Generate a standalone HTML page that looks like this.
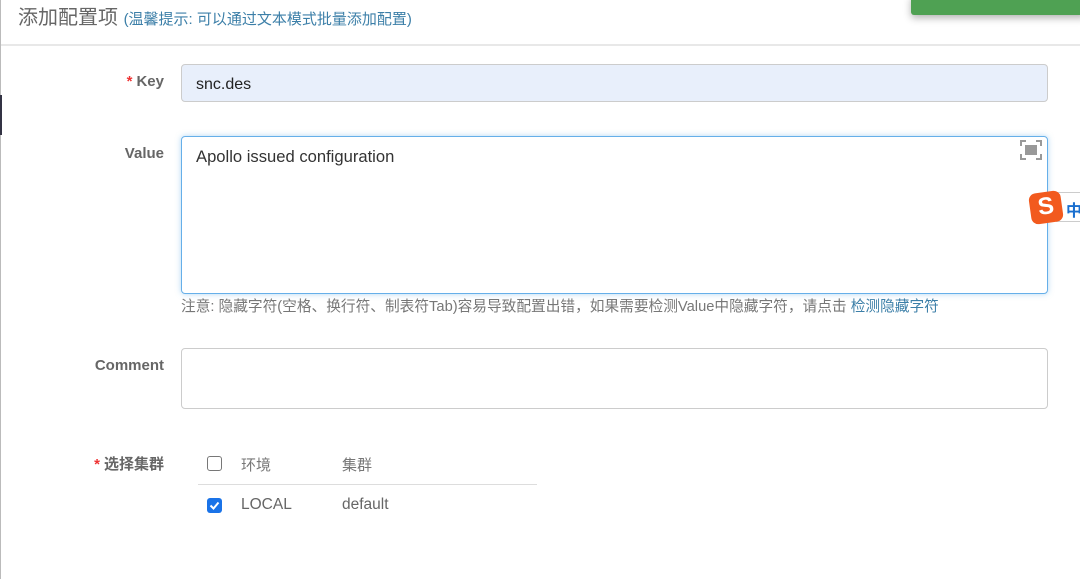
<!DOCTYPE html>
<html><head><meta charset="utf-8"><style>
*{margin:0;padding:0;box-sizing:border-box}
body{width:1080px;height:579px;background:#fff;position:relative;overflow:hidden;font-family:"Liberation Sans","Noto Sans CJK SC",sans-serif;color:#333}
.abs{position:absolute}
.lbl{position:absolute;font-weight:bold;font-size:15px;color:#666;text-align:right;width:164px;left:0}
.lbl b{color:#e33;margin-right:4px}
</style></head><body>
<div class="abs" style="left:0;top:0;width:1px;height:579px;background:#bbb"></div>
<div class="abs" style="left:0;top:95px;width:2px;height:40px;background:#334"></div>
<div class="abs" style="left:911px;top:-5px;width:175px;height:20px;background:#4fa153;border-radius:3px;box-shadow:0 3px 8px rgba(0,0,0,.3)"></div>
<div class="abs" style="left:18px;top:1px;font-size:20px;color:#666;white-space:nowrap">添加配置项 <span style="font-size:15px;color:#3c7fa8">(温馨提示: 可以通过文本模式批量添加配置)</span></div>
<div class="abs" style="left:1px;top:44px;width:1079px;height:2px;background:#e8e8e8"></div>

<div class="lbl" style="top:73px"><b>*</b>Key</div>
<div class="abs" style="left:181px;top:64px;width:867px;height:38px;background:#e8effb;border:1px solid #ccc;border-radius:4px;font-size:16px;padding:11px 14px 0;color:#222">snc.des</div>

<div class="lbl" style="top:145px">Value</div>
<div class="abs" style="left:181px;top:136px;width:867px;height:158px;border:1px solid #66afe9;border-radius:4px;box-shadow:0 0 6px rgba(102,175,233,.5);font-size:16.6px;padding:10px 14px;color:#333">Apollo issued configuration</div>
<svg class="abs" style="left:1020px;top:140px" width="22" height="20" viewBox="0 0 22 20"><path d="M1 6V1h5M16 1h5v5M21 14v5h-5M6 19H1v-5" fill="none" stroke="#999" stroke-width="2"/><rect x="5" y="5" width="12" height="10" fill="#999"/></svg>
<div class="abs" style="left:1056px;top:192px;width:30px;height:30px;background:#fff;border:1px solid #ccc;font-size:16px;color:#1a6fcf;font-weight:bold;padding:4px 0 0 9px">中</div>
<div class="abs" style="left:1030px;top:192px;width:32px;height:31px;background:#f25a1e;border-radius:7px;transform:rotate(-8deg);color:#fff;font-weight:bold;font-size:24px;text-align:center;line-height:30px">S</div>

<div class="abs" style="left:181px;top:295px;font-size:14.7px;color:#777;white-space:nowrap">注意: 隐藏字符(空格、换行符、制表符Tab)容易导致配置出错，如果需要检测Value中隐藏字符，请点击 <span style="color:#3c7fa8">检测隐藏字符</span></div>

<div class="lbl" style="top:357px">Comment</div>
<div class="abs" style="left:181px;top:348px;width:867px;height:61px;border:1px solid #ccc;border-radius:4px"></div>

<div class="lbl" style="top:453px"><b>*</b>选择集群</div>
<div class="abs" style="left:207px;top:456px;width:15px;height:15px;border:1px solid #777;border-radius:3px"></div>
<div class="abs" style="left:241px;top:454px;font-size:15px;color:#777">环境</div>
<div class="abs" style="left:342px;top:454px;font-size:15px;color:#777">集群</div>
<div class="abs" style="left:198px;top:484px;width:339px;height:1px;background:#ddd"></div>
<div class="abs" style="left:207px;top:498px;width:15px;height:15px;background:#1a73e8;border-radius:3px"><svg width="15" height="15" viewBox="0 0 15 15"><path d="M3.5 7.5l3 3 5-6" fill="none" stroke="#fff" stroke-width="2"/></svg></div>
<div class="abs" style="left:241px;top:496px;font-size:15.5px;color:#666">LOCAL</div>
<div class="abs" style="left:342px;top:496px;font-size:15.5px;color:#666">default</div>
</body></html>
